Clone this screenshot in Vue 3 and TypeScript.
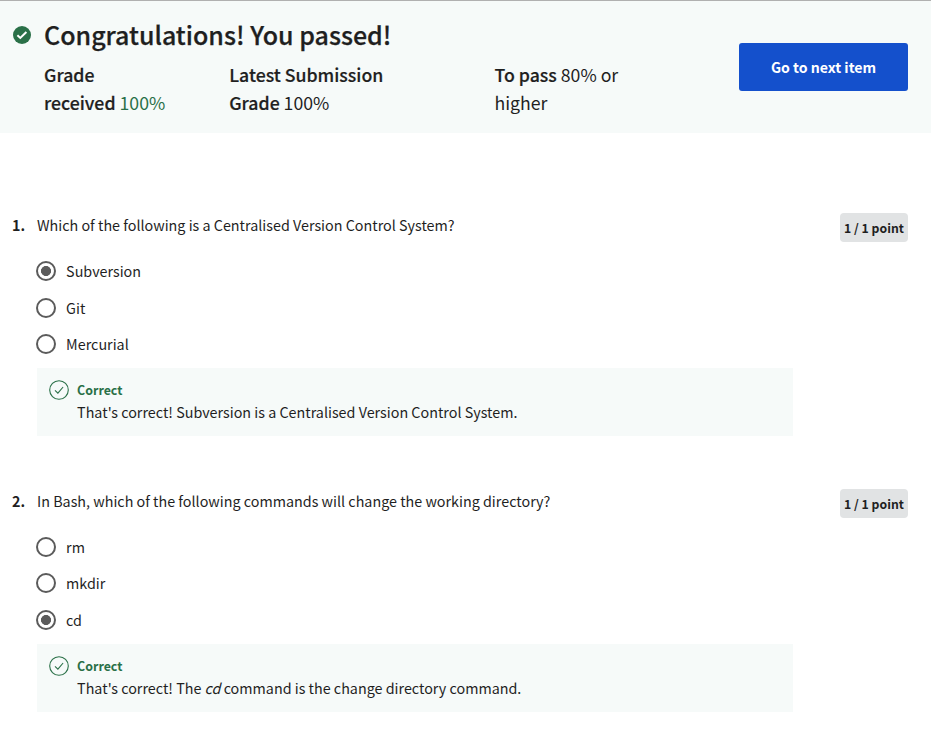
<script setup lang="ts">
interface Option { label: string; selected: boolean }
interface Question { id: number; prompt: string; options: Option[]; before: string; em?: string; after: string }

const questions: Question[] = [
  {
    id: 1,
    prompt: 'Which of the following is a Centralised Version Control System?',
    options: [
      { label: 'Subversion', selected: true },
      { label: 'Git', selected: false },
      { label: 'Mercurial', selected: false },
    ],
    before: "That's correct! Subversion is a Centralised Version Control System.",
    after: '',
  },
  {
    id: 2,
    prompt: 'In Bash, which of the following commands will change the working directory?',
    options: [
      { label: 'rm', selected: false },
      { label: 'mkdir', selected: false },
      { label: 'cd', selected: true },
    ],
    before: "That's correct! The ",
    em: 'cd',
    after: ' command is the change directory command.',
  },
]
</script>

<template>
  <div class="page">
    <header class="banner">
      <svg class="status" viewBox="0 0 18 18"><circle cx="9" cy="9" r="9" /><path d="M4.4 9.2l2.9 2.7 6.1-5.9" /></svg>
      <div class="summary">
        <h1>Congratulations! You passed!</h1>
        <div class="grades">
          <p class="g1"><b>Grade<br>received</b> <span class="green">100%</span></p>
          <p class="g2"><b>Latest Submission<br>Grade</b> 100%</p>
          <p class="g3"><b>To pass</b> 80% or<br>higher</p>
        </div>
      </div>
      <button class="next">Go to next item</button>
    </header>
    <main>
      <section v-for="q in questions" :key="q.id" class="question">
        <div class="num">{{ q.id }}.</div>
        <div class="body">
          <p class="prompt">{{ q.prompt }}</p>
          <ul class="options">
            <li v-for="o in q.options" :key="o.label">
              <span class="radio" :class="{ on: o.selected }"></span><span class="label">{{ o.label }}</span>
            </li>
          </ul>
          <div class="feedback">
            <svg class="tick" viewBox="0 0 20 20"><circle cx="10" cy="10" r="9.3" /><path d="M6 10.3l2.9 2.8 5.2-6.1" /></svg>
            <div>
              <div class="correct">Correct</div>
              <div class="msg">{{ q.before }}<em v-if="q.em">{{ q.em }}</em>{{ q.after }}</div>
            </div>
          </div>
        </div>
        <div class="points">1 / 1 point</div>
      </section>
    </main>
  </div>
</template>

<style>
body { background: #fff; }
</style>
<style scoped>
.page { box-sizing: border-box; height: 739px; overflow: hidden; font-family: "Noto Sans CJK SC", sans-serif; color: #1f1f1f; }
h1, p, ul { margin: 0; padding: 0; }
.banner { box-sizing: border-box; height: 133px; display: flex; align-items: flex-start; background: #f6faf9; border-top: 1px solid #b0b0b0; padding: 0 23px 0 13px; }
.status { width: 18px; height: 18px; margin: 25px 13px 0 0; flex: none; }
.status circle { fill: #2a7048; }
.status path { fill: none; stroke: #fff; stroke-width: 2; }
.summary { flex: 1; }
h1 { font-size: 25px; font-weight: 500; line-height: 36px; margin-top: 15px; white-space: nowrap; -webkit-text-stroke: 0.25px currentColor; }
.grades { display: flex; font-size: 17.7px; line-height: 28px; margin-top: 8px; white-space: nowrap; }
.grades b { font-weight: 500; -webkit-text-stroke: 0.2px currentColor; }
.g1 { width: 185.2px; }
.g2 { width: 265.3px; }
.green { color: #2a7048; }
.next { width: 169px; height: 48px; margin-top: 42px; padding: 0; border: 0; border-radius: 3px; background: #1450cc; color: #fff; font: 700 14.1px/48px "Noto Sans CJK SC", sans-serif; }
main { padding: 80.2px 23px 0 12px; }
.question { display: flex; align-items: flex-start; height: 275.8px; font-size: 14.33px; line-height: 24px; white-space: nowrap; }
.num { width: 25px; font-weight: 700; }
.body { width: 756px; }
.options { list-style: none; margin-top: 15.8px; }
.options li { display: flex; align-items: center; height: 36.4px; }
.radio { box-sizing: border-box; width: 20px; height: 20px; margin: 0 10.1px 0 -1px; border: 2px solid #5b5b5b; border-radius: 50%; }
.radio.on { background: radial-gradient(circle, #5b5b5b 4.7px, transparent 5.3px); }
.feedback { display: flex; box-sizing: border-box; height: 68px; margin-top: 5.8px; padding: 12px; background: #f6faf9; }
.tick { width: 20px; height: 20px; margin-right: 8.1px; fill: none; stroke: #2a7048; stroke-width: 1.1; }
.correct { color: #2a7048; font-weight: 700; font-size: 12.4px; line-height: 20px; }
.points { margin-left: auto; width: 68px; height: 29px; border-radius: 4px; background: #e1e3e4; font-size: 12.25px; font-weight: 700; line-height: 30px; text-align: center; }
</style>
